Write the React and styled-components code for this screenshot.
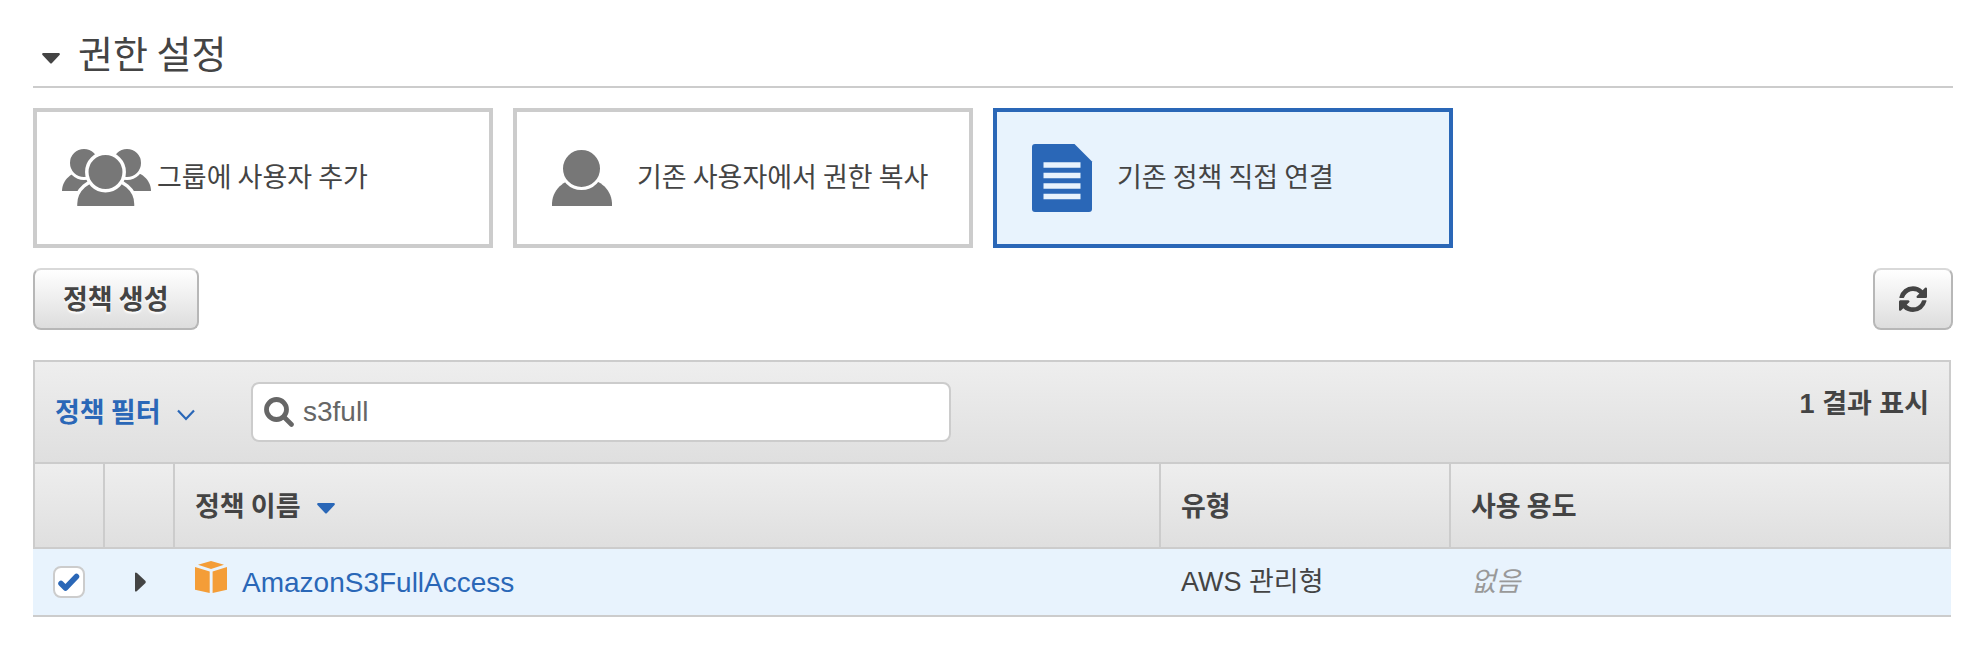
import { useState } from "react"
import styled, { createGlobalStyle, css } from "styled-components"

const latinFirst = `"Liberation Sans", "Noto Sans CJK KR", sans-serif`

const GlobalStyle = createGlobalStyle`
* {
    box-sizing: border-box;
}
body {
    margin: 0;
    background: #fff;
    color: #444;
    font-family: "Noto Sans CJK KR", sans-serif;
    font-size: 27px;
    line-height: 40px;
}
button, input {
    font: inherit;
    color: inherit;
}
`

const policies = [
    { name: "AmazonS3FullAccess", type: "AWS 관리형", usage: "없음" },
]

function GroupIcon() {
return (
    <CardDrawing viewBox="0 0 96 72" aria-hidden="true">
        <path d="M5 49C5 38 15 29 27 29S49 38 49 49z" />
        <path d="M50 49C50 38 60 29 72 29S94 38 94 49z" />
        <circle cx="27" cy="21" r="15.5" stroke="#fff" strokeWidth="3" />
        <circle cx="70" cy="21" r="15.5" stroke="#fff" strokeWidth="3" />
        <path d="M18.5 66V62C18.5 48 31 36.5 48.5 36.5S79 48 79 62V66z" stroke="#fff" strokeWidth="3.5" />
        <circle cx="48.5" cy="30" r="18.7" stroke="#fff" strokeWidth="3.5" />
        <path d="M0 64H96V72H0z" fill="#fff" />
    </CardDrawing>
    )
}

function UserIcon() {
return (
    <CardDrawing viewBox="0 0 96 72" aria-hidden="true">
        <path d="M15 64V61C16 46 29 36 45 36S74 46 75 61V64z" />
        <circle cx="44.5" cy="26.5" r="20" stroke="#fff" strokeWidth="3" />
    </CardDrawing>
    )
}

function PolicyIcon() {
return (
    <CardDrawing viewBox="0 0 96 72" aria-hidden="true">
        <path d="M18 2H57.5L75 19.5V67a3 3 0 0 1-3 3H18a3 3 0 0 1-3-3V5a3 3 0 0 1 3-3z" />
        <path d="M26.5 23H63.5M26.5 33.5H63.5M26.5 44H63.5M26.5 54.5H63.5" stroke="#e8f3fd" strokeWidth="5.5" />
    </CardDrawing>
    )
}

function RefreshIcon() {
return (
    <svg width="28" height="28" viewBox="0 0 1536 1536" aria-hidden="true">
        <path fill="#444" d="M1511 928q0 5-1 7-64 268-268 434.5t-478 166.5q-146 0-282.5-55t-243.5-157l-129 129q-19 19-45 19t-45-19-19-45v-448q0-26 19-45t45-19h448q26 0 45 19t19 45-19 45l-137 137q71 66 161 102t187 36q134 0 250-65t186-179q11-17 53-117 8-23 30-23h192q13 0 22.500 9.500t9.500 22.500zM1536 256v448q0 26-19 45t-45 19h-448q-26 0-45-19t-19-45 19-45l138-138q-148-137-349-137-134 0-250 65t-186 179q-11 17-53 117-8 23-30 23h-199q-13 0-22.500-9.500t-9.500-22.500v-7q65-268 270-434.500t480-166.500q146 0 284 55.500t245 156.500l130-129q19-19 45-19t45 19 19 45z" />
    </svg>
    )
}

function CaretIcon({ color }) {
return (
    <svg width="18" height="11" viewBox="0 0 18 11" aria-hidden="true">
        <path d="M1 0H17Q18.5 0.5 17.5 2L10 10Q9 11 8 10L0.5 2Q-0.5 0.5 1 0z" fill={color} />
    </svg>
    )
}

const methods = [
    { id: "group", label: "그룹에 사용자 추가", Icon: GroupIcon },
    { id: "copy", label: "기존 사용자에서 권한 복사", Icon: UserIcon },
    { id: "attach", label: "기존 정책 직접 연결", Icon: PolicyIcon },
]

export default function App() {
const [method, setMethod] = useState("attach")
const [query, setQuery] = useState("s3full")

return (
    <Page>
    <GlobalStyle />
    <SectionHeader>
        <CaretIcon color="#444" />
        <Title>권한 설정</Title>
    </SectionHeader>
    <Methods>
        {methods.map(({ id, label, Icon }) => (
            <MethodCard key={id} type="button" $selected={id === method} aria-pressed={id === method} onClick={() => setMethod(id)}>
                <Icon />
                <MethodLabel>{label}</MethodLabel>
            </MethodCard>
        ))}
    </Methods>
    <Actions>
        <ActionButton type="button">정책 생성</ActionButton>
        <ActionButton type="button" $icon aria-label="새로 고침"><RefreshIcon /></ActionButton>
    </Actions>
    <Panel>
        <Toolbar>
            <FilterButton type="button">
                정책 필터
                <svg width="18" height="12" viewBox="0 0 18 12" aria-hidden="true">
                    <path d="M1 1.5L9 10L17 1.5" fill="none" stroke="#2a67b7" strokeWidth="2.2" />
                </svg>
            </FilterButton>
            <SearchBox>
                <svg width="30" height="30" viewBox="0 0 30 30" aria-hidden="true">
                    <circle cx="12.5" cy="12.5" r="10" fill="none" stroke="#666" strokeWidth="4.8" />
                    <path d="M20 20L27.5 27.5" stroke="#666" strokeWidth="4.6" strokeLinecap="round" />
                </svg>
                <SearchInput aria-label="정책 검색" value={query} onChange={(e) => setQuery(e.target.value)} />
            </SearchBox>
            <ResultCount>1 결과 표시</ResultCount>
        </Toolbar>
        <Table>
            <colgroup>
                <Col $width="72px" />
                <Col $width="70px" />
                <Col />
                <Col $width="290px" />
                <Col $width="500px" />
            </colgroup>
            <thead>
                <tr>
                    <HeadCell />
                    <HeadCell />
                    <HeadCell>
                        <HeadLabel>
                            정책 이름
                            <CaretIcon color="#2a67b7" />
                        </HeadLabel>
                    </HeadCell>
                    <HeadCell>유형</HeadCell>
                    <HeadCell>사용 용도</HeadCell>
                </tr>
            </thead>
            <tbody>
                {policies.map((policy) => (
                    <tr key={policy.name}>
                        <Cell>
                            <CheckLabel>
                                <Checkbox type="checkbox" defaultChecked aria-label={policy.name} />
                                <svg width="22" height="18" viewBox="0 0 22 18" aria-hidden="true">
                                    <path d="M3 10.5L7.500 15L18.500 3.500" fill="none" stroke="#2a67b7" strokeWidth="5.5" strokeLinecap="round" strokeLinejoin="round" />
                                </svg>
                            </CheckLabel>
                        </Cell>
                        <Cell>
                            <ExpandButton type="button" aria-label="펼치기">
                                <svg width="11" height="20" viewBox="0 0 11 20" aria-hidden="true">
                                    <path d="M0 1Q0.5 0 2 1L10.5 9Q11 10 10.5 11L2 19Q0.5 20 0 19z" fill="#444" />
                                </svg>
                            </ExpandButton>
                        </Cell>
                        <Cell>
                            <PolicyName>
                                <svg width="32" height="32" viewBox="0 0 32 32" aria-hidden="true">
                                    <path d="M16 0L29 3.8L16 8L3 3.8zM0 6L14.7 10.6V32L0 28.8zM32 6L17.6 10.6V32L32 28.8z" fill="#f49d37" />
                                </svg>
                                <PolicyLink href="#policy">{policy.name}</PolicyLink>
                            </PolicyName>
                        </Cell>
                        <Cell>{policy.type}</Cell>
                        <Cell><Usage>{policy.usage}</Usage></Cell>
                    </tr>
                ))}
            </tbody>
        </Table>
    </Panel>
    </Page>
    )
}

const Page = styled.main`
padding: 22px 35px 48px 33px;
`

const SectionHeader = styled.header`
display: flex;
align-items: center;
gap: 18px;
padding: 0 0 4px 9px;
border-bottom: 2px solid #ccc;
svg {
    margin-top: 12px;
}
`

const Title = styled.h2`
margin: 0;
font-size: 38px;
font-weight: 400;
line-height: 60px;
`

const Methods = styled.div`
display: flex;
gap: 20px;
margin-top: 20px;
`

const MethodCard = styled.button`
display: flex;
align-items: center;
gap: 4px;
flex: 0 1 460px;
height: 140px;
padding: 0 20px;
border: 4px solid #ccc;
background: #fff;
text-align: left;
cursor: pointer;
${({ $selected }) => $selected && css`
    border-color: #2a67b7;
    background: #e8f3fd;
`}
`

const MethodLabel = styled.span`
padding-bottom: 4px;
`

const CardDrawing = styled.svg`
flex: none;
width: 96px;
height: 72px;
fill: #777;
${MethodCard}[aria-pressed="true"] & {
    fill: #2a67b7;
}
`

const Actions = styled.div`
display: flex;
justify-content: space-between;
margin-top: 20px;
`

const ActionButton = styled.button`
display: flex;
align-items: center;
justify-content: center;
height: 62px;
padding: 0 ${({ $icon }) => ($icon ? "24px" : "28px")} 2px;
border: 2px solid #b7b7b7;
border-top-color: #d9d9d9;
border-radius: 8px;
background: linear-gradient(#fff, #ddd);
font-weight: 700;
text-shadow: 0 2px 2px #fff;
cursor: pointer;
`

const Panel = styled.section`
margin: 30px 2px 0 0;
`

const Toolbar = styled.div`
display: flex;
align-items: center;
padding: 20px;
border: 2px solid #ccc;
background: linear-gradient(#eee, #dfdfdf);
`

const FilterButton = styled.button`
display: flex;
align-items: center;
gap: 16px;
width: 176px;
margin-right: 20px;
padding: 0 0 2px;
border: 0;
background: none;
color: #2a67b7;
font-weight: 700;
cursor: pointer;
svg {
    margin-top: 8px;
}
`

const SearchBox = styled.label`
display: flex;
align-items: center;
gap: 9px;
flex: 0 1 700px;
height: 60px;
padding: 0 11px;
border: 2px solid #ccc;
border-radius: 8px;
background: #fff;
`

const SearchInput = styled.input`
flex: 1;
min-width: 0;
padding: 0;
border: 0;
outline: 0;
background: none;
color: #666;
font-family: ${latinFirst};
font-size: 28px;
`

const ResultCount = styled.span`
align-self: flex-start;
margin-left: auto;
font-family: ${latinFirst};
font-weight: 700;
line-height: 44px;
`

const Table = styled.table`
width: 100%;
table-layout: fixed;
border-spacing: 0;
`

const Col = styled.col`
width: ${({ $width }) => $width || "auto"};
`

const HeadCell = styled.th`
height: 85px;
padding: 0 20px 2px;
border: solid #ccc;
border-width: 0 2px 2px 0;
background: linear-gradient(#eee, #dfdfdf);
font-weight: 700;
text-align: left;
&:first-child {
    border-left-width: 2px;
}
`

const HeadLabel = styled.span`
display: flex;
align-items: center;
gap: 16px;
svg {
    margin-top: 8px;
}
`

const Cell = styled.td`
height: 68px;
padding: 0 20px;
border-bottom: 2px solid #ccc;
background: #e8f3fd;
font-family: ${latinFirst};
`

const CheckLabel = styled.label`
display: grid;
width: 32px;
height: 32px;
place-items: center;
svg {
    grid-area: 1 / 1;
    pointer-events: none;
}
input:not(:checked) + svg {
    visibility: hidden;
}
`

const Checkbox = styled.input`
grid-area: 1 / 1;
appearance: none;
width: 32px;
height: 32px;
margin: 0;
border: 2px solid #ccc;
border-radius: 8px;
background: #fff;
`

const ExpandButton = styled.button`
display: flex;
padding: 0 10px;
border: 0;
background: none;
cursor: pointer;
`

const PolicyName = styled.span`
display: flex;
gap: 15px;
`

const PolicyLink = styled.a`
padding-top: 2px;
color: #2a67b7;
font-size: 28px;
text-decoration: none;
`

const Usage = styled.em`
color: #999;
`
